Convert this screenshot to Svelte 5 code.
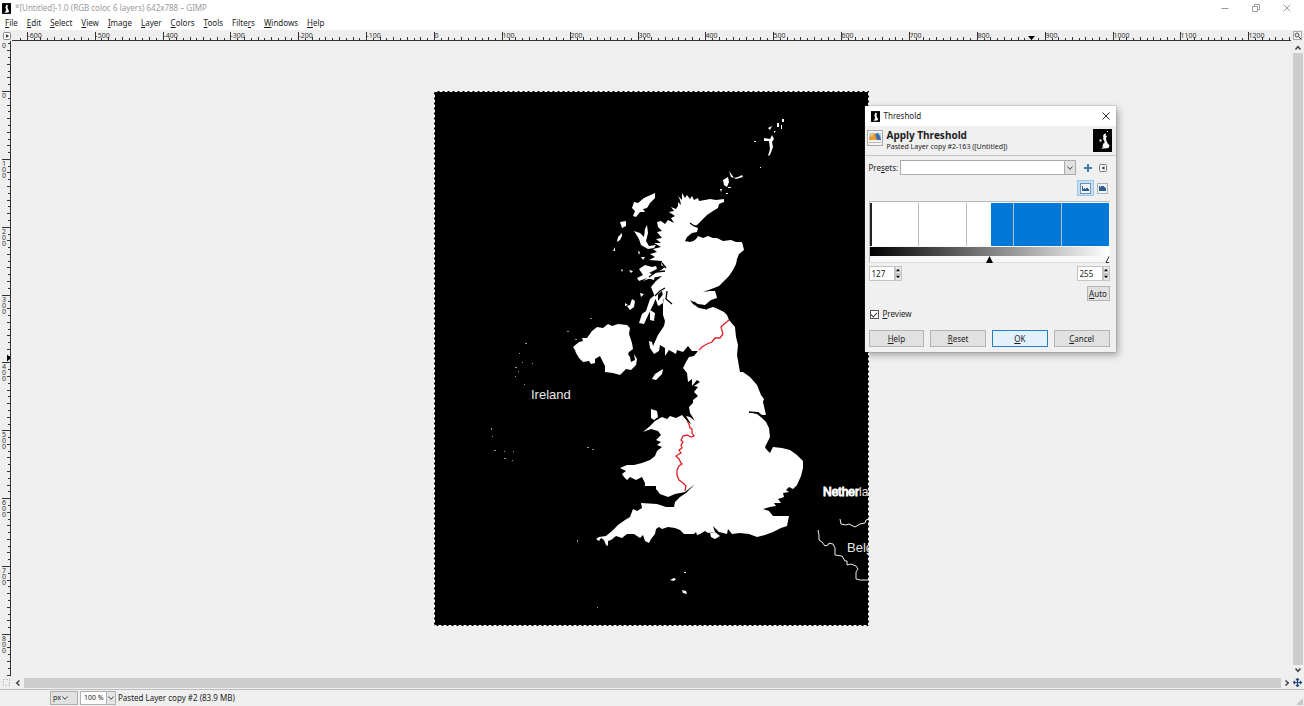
<script>
  const menus = [
    ['', 'F', 'ile'], ['', 'E', 'dit'], ['', 'S', 'elect'], ['', 'V', 'iew'], ['', 'I', 'mage'], ['', 'L', 'ayer'],
    ['', 'C', 'olors'], ['', 'T', 'ools'], ['Filte', 'r', 's'], ['', 'W', 'indows'], ['', 'H', 'elp']
  ];
  const step = 435 / 641;
  let width = $state(1279);
  let height = $state(635);

  function ticks(length, size) {
    const origin = Math.floor((length - size) / 2);
    const first = Math.ceil((2 - origin) / (10 * step));
    const last = Math.floor((length - origin) / (10 * step));
    return Array.from({ length: last - first + 1 }, (_, n) => {
      const i = first + n;
      const at = origin + Math.round(i * 10 * step) + 0.5;
      return { at, major: i % 10 === 0, mid: i % 2 === 0, label: i % 10 === 0 && at + 20 < length ? String(i * 10) : '' };
    });
  }
  const hTicks = $derived(ticks(width, 435));
  const vTicks = $derived(ticks(height, 534));

  const land =
    'M678 202L681 205 680 200 678 196 682 200 682 193 685 198 687 195 690 199 692 196 694 200 698 198 699 201 705 200 710 199 716 200 724 199 724 202 719 204 718 208 713 211 707 215 703 219 697 225 694 226 698 228 697 232 692 233 687 237 685 241 690 242 695 240 698 236 703 238 708 236 713 238 717 238 723 241 731 240 736 242 742 242 743 246 744 250 739 254 737 259 736 264 733 270 729 276 724 281 719 286 714 288 703 292 710 291 715 291 716 294 717 298 711 300 705 305 698 304 690 300 693 304 699 308 707 309 713 307 718 309 724 312 727 315 729 320 735 327 736 337 738 345 737 355 740 372 743 372 750 377 757 385 761 395 764 399 763 402 766 415 762 415 758 412 749 412 757 414 762 418 766 422 769 428 770 437 765 447 766 449 770 453 773 447 782 448 790 450 797 455 803 461 803 468 801 476 797 485 793 489 789 487 786 490 789 492 783 493 784 497 778 499 781 503 774 503 776 506 770 507 763 509 769 511 773 516 789 516 788 521 787 526 781 528 773 532 765 535 757 537 749 534 740 533 732 534 728 529 727 534 719 532 713 526 715 532 708 533 705 531 700 534 697 535 696 532 694 534 684 534 680 530 675 528 668 527 662 529 659 527 656 529 655 534 651 539 649 543 645 541 643 535 640 538 634 534 627 534 622 538 616 536 611 540 608 541 608 546 606 545 604 540 601 538 599 541 596 539 599 537 606 536 612 531 618 525 625 520 630 517 633 509 637 511 642 508 641 503 657 504 666 507 674 507 675 502 680 497 686 493 695 484 685 492 675 494 668 497 660 494 656 489 656 486 645 486 645 483 642 477 636 480 630 477 627 480 624 477 622 474 626 471 620 468 627 465 634 465 642 463 650 460 655 456 657 451 662 447 657 445 661 442 656 440 661 435 658 431 651 429 643 432 649 427 655 421 662 417 667 419 670 416 676 418 682 415 688 422 691 424 686 416 690 417 695 421 690 413 689 407 693 403 693 400 698 396 694 392 698 387 694 386 700 382 697 380 692 386 692 379 688 382 687 373 683 368 686 362 689 357 694 356 698 351 692 351 688 346 683 352 677 350 676 354 669 350 665 356 665 348 660 345 659 351 654 354 650 348 649 341 652 342 653 346 658 335 664 326 665 321 663 315 663 304 664 298 659 307 663 296 662 291 655 297 653 292 651 287 656 281 662 276 651 278 643 281 651 275 661 270 665 267 661 265 662 261 649 260 655 257 650 254 657 252 653 249 661 247 654 243 661 243 656 239 662 238 657 232 662 231 658 227 657 222 661 221 665 224 668 220 674 223 671 218 675 216 669 212 674 211 671 207 676 209 678 206z';
  const isles = [
    'M573 347L579 342 583 341 582 338 587 338 592 331 597 327 603 328 608 324 612 326 618 324 627 325 630 328 629 334 632 343 633 349 629 352 628 354 630 357 631 362 635 360 634 354 637 359 636 365 631 370 626 369 620 375 613 373 605 372 605 366 600 356 595 359 595 363 591 364 589 361 583 362 579 358 576 353 575 350z',
    'M655 193l0 5-5 5-3 5-4 1 2 3-5 0-4 5-3-1 2-5-3-3 2-6 4 1 6-5z',
    'M620 222l6-1 0 5-4 2zM622 233l-4 4-1 5 3-2 2-4zM615 247l-2 4 2 0zM621 269l2 1-1 2z',
    'M634 231l6 2 4 4 1-8 2-4 1 8-2 8 3 5 7-1-2 3-6 1-7-4-2-6zM638 251l2 1-1 3zM641 257h4l-2 3z',
    'M639 269l6-4 7 2 4-1 1 3-8 4 6 2-1 5-7-2-8 3-2-3 6-3zM629 270l4 1-2 2z',
    'M632 299l3 2-1 6-4 3-3-4 3-1zM640 293l4 1-3 3zM625 303l3 2-3 1z',
    'M661 287l4-3-7 8-4 11-3 6-7 15-5-1 3-9 4-3 4-12 6-5zM650 310l5 3-1 8-4-1zM655 297l3-4 0 8 6-8-1 10-5 3z',
    'M663 369l-1 5-6 6-4-1 3-5zM651 409l6 2 1 6-4 3-3-2z',
    'M710 533l5-1 5 4-5 3-4-2z',
    'M723 180l5-3 1 5-2 5-3-2zM729 171l3 4 2 3-3-1zM734 178l4-1 4-2 1 2-7 2zM728 187h3v1h-3zM720 189h2l-1 3zM726 193h2v1h-2z',
    'M764 138l6 1 2-4 2 4-2 3 1 5-3 8-2 1 2-7-1-8-5 0zM768 128l4-2-2 4zM777 123h2v4h-2zM782 119h2v3h-2zM781 125h1v4h-1zM774 131h2l-2 2z',
    'M754 141h2v1h-2zM760 167h1v1h-1zM670 580l4-2 2 1-2 2zM682 590l4 1 1 3-4-1zM684 572h2v1h-2z'
  ];
  const specks =
    'M590 318h2v1h-2zM567 331h2v1h-2zM575 339h2v1h-2zM525 343h2v1h-2zM519 353h1v1h-1zM515 367h2v1h-2zM532 363h1v1h-1zM522 362h1v1h-1zM524 384h1v1h-1zM515 376h1v1h-1zM518 371h1v1h-1zM491 428h1v2h-1zM492 436h1v1h-1zM494 450h2v1h-2zM504 451h1v1h-1zM504 458h2v1h-2zM513 451h1v1h-1zM512 460h1v1h-1zM587 447h2v1h-2zM592 449h2v1h-2zM577 540h1v2h-1zM597 607h1v1h-1z';
  const inlets =
    'M649 277l7-5 9-1M662 263l4 5M655 296l5-5 5-3M667 291l-1 8 6 5M690 223l4 3 4 1M694 302l5 5 8 2M686 241l4-4 6-3M697 237l-5 4M749 412l10 1';
</script>

<svelte:head><title>GIMP</title></svelte:head>

{#snippet mark()}
  <svg class="mark" viewBox="0 0 10 12" aria-hidden="true">
    <rect width="10" height="12" />
    <path fill="#fff" d="M5 1.5l1 .8 1 .5-1 1.4.4 1.8 1 2 .4 1.5-1 .9-3.2.4-1.2.3 1-1 .9-.5-.9-.9 1.4-.7-.5-2-.7-.6.6-1.6z" />
  </svg>
{/snippet}
{#snippet chevron(turn)}
  <svg class="chev" viewBox="0 0 8 8" aria-hidden="true"><path d="M1.5 2.5L4 5.3l2.5-2.8" transform="rotate({turn} 4 4)" /></svg>
{/snippet}

<div class="app">
  <header class="titlebar">
    {@render mark()}
    <span>*[Untitled]-1.0 (RGB color, 6 layers) 642x788 – GIMP</span>
    <div class="winbtns">
      <button aria-label="Minimize"><svg viewBox="0 0 8 8"><path d="M.5 4.5h7" /></svg></button>
      <button aria-label="Restore"><svg viewBox="0 0 8 8"><path d="M.5 2.5h5v5h-5zM2.5 2.5v-2h5v5h-2" /></svg></button>
      <button aria-label="Close"><svg viewBox="0 0 8 8"><path d="M.7.7l6.6 6.6M7.3.7L.7 7.3" /></svg></button>
    </div>
  </header>

  <nav class="menubar">
    {#each menus as [a, u, b]}<button>{a}<u>{u}</u>{b}</button>{/each}
  </nav>

  <main class="workspace">
    <button class="corner" aria-label="Image menu">
      <svg viewBox="0 0 9 9"><rect x="1.5" y="1.5" width="7" height="7" rx="1" fill="#f6f6f6" stroke="#888" /><path d="M4 3.2L7 5 4 6.8z" fill="#333" /></svg>
    </button>

    <svg class="hruler" aria-hidden="true">
      {#each hTicks as t}
        <path d="M{t.at} {t.major ? 2 : t.mid ? 7 : 8}V11" />
        {#if t.label}<text x={t.at} y="8">{t.label}</text>{/if}
      {/each}
      <path d="M0 10.5H3000" />
      <svg x="50%" overflow="visible"><path class="pointer" d="M376.5 6h7l-3.500 4z" /></svg>
    </svg>

    <button class="corner" aria-label="Zoom with window">
      <svg viewBox="0 0 9 9"><rect x=".5" y=".5" width="8" height="8" fill="#f8f8f8" stroke="#aaa" /><circle cx="4" cy="4" r="2" fill="#dce9f2" stroke="#555" /><path d="M5.5 5.5L8 8" stroke="#333" /></svg>
    </button>

    <svg class="vruler" aria-hidden="true">
      {#each vTicks as t}
        <path d="M{t.major ? 2 : t.mid ? 7 : 8} {t.at}H11" />
        {#each t.label as ch, n}<text x="2" y={t.at + 6 + n * 6}>{ch}</text>{/each}
      {/each}
      <text x="2" y="7">0</text>
      <path d="M10.500 0V2000" />
      <svg y="50%" overflow="visible"><path class="pointer" d="M7-4v7l4-3.500z" /></svg>
    </svg>

    <section class="canvas" bind:clientWidth={width} bind:clientHeight={height}>
      <svg class="map" viewBox="434 91 435 535" role="img" aria-label="Thresholded map">
        <rect x="434" y="91" width="435" height="535" />
        <path class="land" d={land} />
        {#each isles as d}<path class="land" {d} />{/each}
        <path class="specks" d={specks} />
        <path class="inlet" d={inlets} />
        <path class="border" d="M729 320l-6 5-2 2 2 7-3 4-5 0-3 4-5 2-5 3-3 3" />
        <path class="border" d="M687 421l2 3 1 4 2 1 0 4 2 3-3 1-4-2-4 1-2 4 2 2-2 3 1 3-3 2 2 3-2 1-3 2 3 3 2 4 1 1-3 2-2 4 0 5 2 5 4 3 3 3-1 5" />
        <path class="coast" d="M840 519l1 5 5 1 3-1 6 3 5-3 5-1 1-3 3-1M818 530l1 5 0 5 3 2 3 4 3-1 1-2 4 1 2 4 0 7 7 1 3 5 2 0 0 4 4-1 5 2 2 3-2 3 0 7 4 1 9 0" />
        <text x="531" y="399">Ireland</text>
        <text x="823" y="496" class="tight"><tspan class="heavy">Nether</tspan>lands</text>
        <text x="847" y="552">Belgium</text>
        <rect x="434.5" y="91.500" width="434" height="534" fill="none" stroke="#fff" stroke-dasharray="3 2" />
      </svg>

      <section class="dialog" aria-label="Threshold">
        <header class="dtitle">
          {@render mark()}<span>Threshold</span>
          <button aria-label="Close"><svg viewBox="0 0 8 8"><path d="M.5.5l7 7M7.500.5l-7 7" /></svg></button>
        </header>
        <div class="dhead">
          <svg class="opicon" viewBox="0 0 16 16" aria-hidden="true">
            <rect x=".5" y=".5" width="15" height="15" fill="#f4f4f4" stroke="#aaa" />
            <path fill="#bfd5e6" d="M2 3h12v7H2z" /><path fill="#e99d3c" d="M2 10V7l2-1 1-2 2-1 2 2 2 5z" /><circle cx="5" cy="5" r="1.500" fill="#f3c04f" /><path fill="#3d70ad" d="M8 4l3-1 2 3 1 4h-4z" /><path stroke="#bbb" d="M2 12.500h12" />
          </svg>
          <div class="dnames"><h1>Apply Threshold</h1><p>Pasted Layer copy #2-163 ([Untitled])</p></div>
          <svg class="thumb" viewBox="0 0 19 23" aria-hidden="true">
            <rect width="19" height="23" />
            <path fill="#fff" d="M11 5l2-.5-.5 2 1.500.5-1 2 .5 3 1.500 3 1.500 1-.5 2-.5 1-7 .8.500-1 2-.8-2-.5 1-1.500.2-1.500 1.500-.5-.7-3-1-.5.5-2-.5-1.500zM6.500 10.500h2v2h-2zM14 2h1v1h-1z" />
          </svg>
        </div>

        <div class="dbody">
          <div class="row presets">
            <label for="presets">Pre<u>s</u>ets:</label>
            <div class="combo"><select id="presets"><option></option></select><span class="drop">{@render chevron(0)}</span></div>
            <button class="bare plus" aria-label="Add preset"><svg viewBox="0 0 10 10"><path fill="#4d79a8" d="M4 1h2v3h3v2H6v3H4V6H1V4h3z" /></svg></button>
            <button class="bare" aria-label="Manage presets"><svg viewBox="0 0 10 10"><rect x="1.500" y="1.500" width="7" height="7" rx="1" fill="#f8f8f8" stroke="#777" /><path fill="#333" d="M6.500 3.200v3.600L3.500 5z" /></svg></button>
          </div>
          <div class="row scales">
            <button class="scale active" aria-label="Linear histogram"><svg viewBox="0 0 11 11"><rect x=".5" y=".5" width="10" height="10" fill="#eef5fb" stroke="#7991a8" /><path fill="#315d8d" d="M2 3h1v3h1V5h1v1h1V5h2v1h1v2H2z" /></svg></button>
            <button class="scale log" aria-label="Logarithmic histogram"><svg viewBox="0 0 11 11"><rect x=".5" y=".5" width="10" height="10" fill="#eef5fb" stroke="#aab4be" /><path fill="#315d8d" d="M2 3h1v1h1V3h3v1h1v1h1v3H2z" /></svg></button>
          </div>
          <div class="histogram">
            <div class="plot"><i></i><i></i><i></i><i></i><i></i></div>
            <div class="ramp"></div>
            <svg class="handles" viewBox="0 0 240 7" preserveAspectRatio="none" aria-hidden="true"><path d="M119.500 0l3.500 7h-7z" /><path d="M239 .5l-3 6h3" fill="#fff" stroke="#000" stroke-width=".8" /></svg>
          </div>
          <div class="row limits">
            {#each [['Low', 127], ['High', 255]] as [name, value]}
              <div class="spin">
                <input type="text" inputmode="numeric" aria-label={name} {value} />
                <span><button aria-label="Increase"><svg viewBox="0 0 6 6"><path d="M0 5h6L3 1z" /></svg></button><button aria-label="Decrease"><svg viewBox="0 0 6 6"><path d="M0 1h6L3 5z" /></svg></button></span>
              </div>
            {/each}
          </div>
          <button class="push auto"><u>A</u>uto</button>
          <label class="preview"><input type="checkbox" checked /><span><u>P</u>review</span></label>
          <div class="actions">
            <button class="push"><u>H</u>elp</button>
            <button class="push"><u>R</u>eset</button>
            <button class="push ok"><u>O</u>K</button>
            <button class="push"><u>C</u>ancel</button>
          </div>
        </div>
      </section>
    </section>

    <div class="vscroll">
      <button aria-label="Scroll up">{@render chevron(180)}</button><div class="bar"></div><button aria-label="Scroll down">{@render chevron(0)}</button>
    </div>

    <button class="corner" aria-label="Quick mask"><svg viewBox="0 0 9 9"><rect x="1.500" y="1.500" width="6" height="6" fill="none" stroke="#999" stroke-dasharray="1 2" /></svg></button>
    <div class="hscroll">
      <button aria-label="Scroll left">{@render chevron(90)}</button><div class="bar"></div><button aria-label="Scroll right">{@render chevron(-90)}</button>
    </div>
    <button class="corner" aria-label="Navigate"><svg viewBox="0 0 9 9"><path fill="none" stroke="#24457a" stroke-width="1.200" d="M4.500 0v9M0 4.500h9M3 2l1.500-1.500L6 2M3 7l1.500 1.500L6 7M2 3L.5 4.500 2 6M7 3l1.500 1.500L7 6" /></svg></button>
  </main>

  <footer class="status">
    <div class="pick unit"><select aria-label="Unit"><option>px</option></select>{@render chevron(0)}</div>
    <div class="pick zoom"><select aria-label="Zoom"><option>100 %</option></select><span>{@render chevron(0)}</span></div>
    <span>Pasted Layer copy #2 (83.9 MB)</span>
    <svg class="grip" viewBox="0 0 8 8" aria-hidden="true"><path fill="#c8c8c8" d="M8 0v8H0z" /></svg>
  </footer>
</div>

<style>
  :global(body) { margin: 0; background: #efefef; }
  .app, .app :global(*) { box-sizing: border-box; }
  .app { display: flex; flex-direction: column; min-height: 100vh; background: #efefef; color: #1c1c1c; font: 8px/12px "Noto Sans", "Open Sans", sans-serif; overflow: hidden; }
  svg { display: block; }
  button, select, input { font: inherit; color: inherit; margin: 0; padding: 0; border: 0; background: none; border-radius: 0; appearance: none; outline: 0; }
  u { text-underline-offset: 1px; text-decoration-thickness: 1px; }
  .mark { width: 9px; height: 11px; flex: none; }
  .chev { width: 8px; height: 8px; flex: none; fill: none; stroke: #444; stroke-width: 1; }

  .titlebar { display: flex; align-items: center; gap: 4px; height: 16px; padding-left: 2px; background: #fff; color: #9a9a9a; }
  .winbtns { display: flex; margin-left: auto; padding-right: 2px; }
  .winbtns button { width: 31px; height: 14px; display: grid; place-items: center; }
  .winbtns svg { width: 8px; height: 8px; fill: none; stroke: #999; stroke-width: 1; }
  .menubar { display: flex; height: 14px; padding-left: 5px; gap: 9px; background: #fff; }

  .workspace { flex: 1; display: grid; grid-template-columns: 12px 1fr 13px; grid-template-rows: 11px 1fr 13px; }
  .corner { display: grid; place-items: center; overflow: hidden; }
  .corner svg { width: 9px; height: 9px; }
  .hruler, .vruler { width: 100%; overflow: hidden; stroke: #333; stroke-width: 1; }
  .hruler { height: 11px; }
  .vruler { height: 0; min-height: 100%; }
  .hruler text, .vruler text { font-size: 7px; fill: #333; stroke: none; }
  .pointer { fill: #000; stroke: none; }
  .canvas { position: relative; display: flex; align-items: center; justify-content: center; min-width: 0; }
  .map { width: 435px; height: 535px; flex: none; font: 13px "Liberation Sans", Arial, sans-serif; }
  .map text { fill: #e8e8e8; }
  .map .tight { font-size: 12px; }
  .heavy { stroke: #fff; stroke-width: 1; }
  .land { fill: #fff; }
  .specks { fill: #999; }
  .inlet { fill: none; stroke: #000; stroke-width: 1.300; }
  .border { fill: none; stroke: #df2029; stroke-width: 1.300; }
  .coast { fill: none; stroke: #eee; stroke-width: 1; }
  .vscroll { display: flex; flex-direction: column; align-items: center; padding: 3px 0 2px; gap: 1px; }
  .vscroll .bar { flex: 1; width: 10px; background: #cdcdcd; }
  .hscroll { display: flex; align-items: center; padding: 0 0 0 2px; gap: 2px; }
  .hscroll .bar { flex: 1; height: 10px; background: #cdcdcd; }
  .vscroll .chev, .hscroll .chev { stroke-width: 1.500; }

  .status { display: flex; align-items: center; height: 17px; padding-left: 50px; border-top: 1px solid #bbb; gap: 2px; }
  .pick { display: flex; align-items: center; height: 14px; border: 1px solid #b0b0b0; }
  .pick select { height: 12px; font-size: 7px; }
  .unit { width: 28px; padding-left: 2px; background: #e1e1e1; }
  .zoom { width: 36px; background: #fff; justify-content: flex-end; }
  .zoom span { display: grid; place-items: center; height: 12px; margin-left: 2px; background: #e5e5e5; border-left: 1px solid #b0b0b0; }
  .grip { width: 7px; height: 7px; margin: 6px 1px 0 auto; }

  .dialog { position: absolute; left: calc(50% + 213px); top: 65px; width: 251px; background: #f0f0f0; box-shadow: 0 0 1px #666, 2px 3px 7px #0005; }
  .dtitle { display: flex; align-items: center; gap: 4px; height: 20px; padding: 0 6px; background: #fff; }
  .dtitle button { margin-left: auto; width: 8px; height: 8px; }
  .dtitle button svg { fill: none; stroke: #333; stroke-width: 1; }
  .dhead { display: flex; gap: 4px; height: 30px; padding: 3px 4px 0 2px; border-bottom: 1px solid #c3c3c3; }
  .opicon { width: 16px; height: 16px; margin-top: 1px; }
  .dnames { flex: 1; }
  h1 { margin: 0; font-size: 10px; line-height: 13px; font-weight: 700; }
  p { margin: 0; font-size: 7px; line-height: 9px; }
  .thumb { width: 19px; height: 23px; }
  .dbody { display: flex; flex-direction: column; padding: 4px 6px 5px 4px; }
  .row { display: flex; align-items: center; }
  .presets { height: 15px; padding-right: 2px; }
  .presets label { width: 31px; }
  .combo { flex: 1; display: flex; height: 15px; background: #fff; border: 1px solid #aaa; }
  .combo select { flex: 1; min-width: 0; }
  .drop { display: grid; place-items: center; width: 11px; background: #e1e1e1; border-left: 1px solid #aaa; }
  .bare { width: 10px; height: 10px; margin-left: 5px; }
  .plus { margin-left: 7px; }
  .bare svg { width: 10px; height: 10px; }
  .scales { justify-content: flex-end; margin-top: 5px; gap: 1px; }
  .scale { display: grid; place-items: center; width: 17px; height: 16px; }
  .log { width: 15px; }
  .scale svg { width: 11px; height: 11px; }
  .active { background: #c5dff5; border: 1px solid #9bc7ea; }
  .histogram { margin-top: 5px; height: 62px; padding-top: 1px; border: 1px solid #bbb; border-right: 0; border-bottom-color: #ddd; background: #f7f7f7; }
  .plot { display: flex; height: 43px; margin-right: 1px; border-left: 2px solid #222; background: linear-gradient(90deg, #fff 50%, #0078d7 50%); }
  .plot i { flex: 1; border-right: 1px solid #b9bec5; }
  .plot i:last-child { border: 0; }
  .ramp { height: 9px; margin: 1px 1px 0 0; background: linear-gradient(90deg, #000, #fff); }
  .handles { width: 100%; height: 7px; }
  .limits { justify-content: space-between; margin-top: 3px; }
  .spin { display: flex; width: 33px; height: 15px; }
  .spin input { width: 26px; padding-left: 2px; background: #fff; border: 1px solid #c4c4c4; }
  .spin span { display: flex; flex-direction: column; width: 7px; }
  .spin span button { display: grid; place-items: center; height: 8px; width: 7px; background: #e8e8e8; border: 1px solid #c4c4c4; }
  .spin span svg { width: 4px; height: 4px; }
  .push { height: 17px; background: #e1e1e1; border: 1px solid #b4b4b4; text-align: center; }
  .auto { align-self: flex-end; width: 23px; height: 15px; margin-top: 5px; line-height: 12px; }
  .preview { display: flex; align-items: center; gap: 4px; height: 12px; margin-top: 7px; }
  .preview input { width: 9px; height: 9px; margin-left: 1px; border: 1px solid #555; background: #fff; display: grid; place-items: center; }
  .preview input:checked::before { content: ""; width: 5px; height: 3px; border: solid #444; border-width: 0 0 1px 1px; transform: rotate(-45deg); }
  .actions { display: grid; grid-template-columns: repeat(4, 1fr); gap: 6px; margin-top: 10px; }
  .ok { background: #e2f1fc; border-color: #2a7fc9; }
</style>
